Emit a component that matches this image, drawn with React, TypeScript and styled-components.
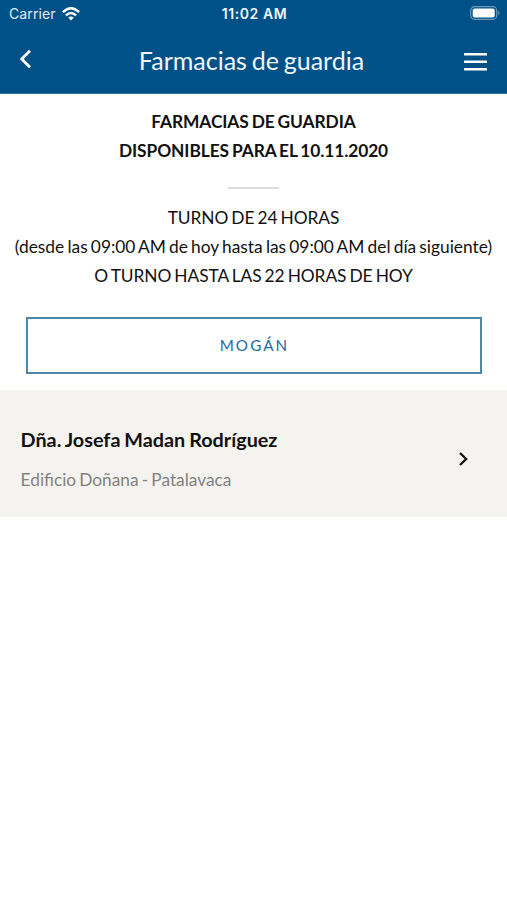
import React from "react";
import { createGlobalStyle, styled } from "styled-components";

const GlobalStyle = createGlobalStyle`
  * { box-sizing: border-box; }
  body { margin: 0; background: #fff; font-family: Lato, sans-serif; color: #111; }
`;
const Screen = styled.main`
  width: 507px;
  height: 900px;
  overflow: hidden;
  background: #fff;
`;
const Header = styled.header`
  height: 94px;
  background: #005187;
  border-bottom: 1px solid #3474a0;
  color: #fff;
`;
const StatusBar = styled.div`
  display: grid;
  grid-template-columns: 1fr auto 1fr;
  align-items: center;
  height: 27px;
  padding: 0 7px 0 9px;
  font-family: Inter, sans-serif;
  font-size: 14px;
  line-height: 27px;
`;
const Carrier = styled.div`
  display: flex;
  align-items: center;
  gap: 6px;
  letter-spacing: 0.1px;
  color: #e4edf3;
`;
const Clock = styled.div`
  padding-top: 1px;
  font-weight: 600;
  font-size: 14px;
  line-height: 26px;
  letter-spacing: 0.55px;
  color: #f1f6f9;
`;
const Battery = styled.svg`
  justify-self: end;
  margin-bottom: 1px;
`;
const NavBar = styled.nav`
  display: grid;
  grid-template-columns: 60px 1fr 60px;
  align-items: center;
  height: 66px;
`;
const IconButton = styled.button<{ $end?: boolean }>`
  display: flex;
  justify-content: ${(p) => (p.$end ? "flex-end" : "flex-start")};
  padding: ${(p) => (p.$end ? "3px 20px 0 0" : "0 0 2px 18px")};
  border: 0;
  background: none;
  color: inherit;
`;
const Title = styled.h1`
  margin: 0 4px 0 0;
  text-align: center;
  font-size: 25px;
  font-weight: 400;
  line-height: 30px;
  padding-bottom: 1px;
  word-spacing: -1.6px;
  color: #f1f6f9;
`;
const Intro = styled.section`
  padding-top: 13px;
  text-align: center;
  font-size: 17.35px;
  line-height: 29.3px;
  word-spacing: -1.25px;
`;
const Line = styled.p<{ $bold?: boolean; $caps?: boolean }>`
  margin: 0;
  white-space: nowrap;
  font-weight: ${(p) => (p.$bold ? 700 : 400)};
  letter-spacing: ${(p) => (p.$caps ? "-0.08px" : "0")};
`;
const Divider = styled.hr`
  width: 51px;
  height: 2px;
  margin: 21px auto 14px;
  border: 0;
  background: #ddd;
`;
const TownButton = styled.button`
  display: block;
  width: 456px;
  height: 57px;
  margin: 27px auto 16px;
  border: 2px solid #4b86ad;
  padding: 0 0 2px 2px;
  background: #fff;
  color: #2469a0;
  font: 400 15.2px/24px Lato, sans-serif;
  letter-spacing: 2.1px;
`;
const Pharmacy = styled.article`
  display: flex;
  align-items: center;
  justify-content: space-between;
  height: 127px;
  padding: 11px 38px 0 20.6px;
  background: #f4f3ef;
`;
const Name = styled.h2`
  margin: 0 0 17px;
  font-size: 19.8px;
  line-height: 24px;
  font-weight: 700;
  word-spacing: -0.9px;
`;
const Address = styled.p`
  margin: 0;
  color: #83827f;
  font-size: 17.3px;
  line-height: 24px;
  word-spacing: -1.25px;
`;

export default function App() {
  return (
    <Screen>
      <GlobalStyle />
      <Header>
        <StatusBar>
          <Carrier>
            <span>Carrier</span>
            <svg width="18" height="14" viewBox="0 0 18 14" fill="none" stroke="white" strokeWidth="2.4">
              <path d="M.9 5.2Q9-2.6 17.1 5.2M3.9 8.4Q9 3.6 14.1 8.4" />
              <path d="M6.2 10.6Q9 8.2 11.8 10.6L9 13.4Z" fill="white" stroke="none" />
            </svg>
          </Carrier>
          <Clock>11:02 AM</Clock>
          <Battery width="30" height="14" viewBox="0 0 30 14" fill="none">
            <rect x=".7" y=".7" width="26" height="12.6" rx="3.8" stroke="#6d98b7" strokeWidth="1.2" />
            <rect x="2.7" y="2.5" width="22" height="9" rx="2" fill="white" />
            <path d="M28.2 4.8Q30.8 7 28.2 9.2Z" fill="#6d98b7" />
          </Battery>
        </StatusBar>
        <NavBar>
          <IconButton aria-label="Volver">
            <svg width="14" height="20" viewBox="0 0 14 20" fill="none" stroke="currentColor" strokeWidth="2.8">
              <path d="M12 1.8 3.7 10l8.3 8.2" />
            </svg>
          </IconButton>
          <Title>Farmacias de guardia</Title>
          <IconButton aria-label="Menú" $end>
            <svg width="23" height="18" viewBox="0 0 23 18" fill="currentColor">
              <rect width="23" height="2.6" rx=".7" />
              <rect y="7.5" width="23" height="2.6" rx=".7" />
              <rect y="15" width="23" height="2.6" rx=".7" />
            </svg>
          </IconButton>
        </NavBar>
      </Header>
      <Intro>
        <Line $bold $caps>FARMACIAS DE GUARDIA</Line>
        <Line $bold $caps>DISPONIBLES PARA EL 10.11.2020</Line>
        <Divider />
        <Line $caps>TURNO DE 24 HORAS</Line>
        <Line>(desde las 09:00 AM de hoy hasta las 09:00 AM del día siguiente)</Line>
        <Line $caps>O TURNO HASTA LAS 22 HORAS DE HOY</Line>
      </Intro>
      <TownButton>MOGÁN</TownButton>
      <Pharmacy>
        <div>
          <Name>Dña. Josefa Madan Rodríguez</Name>
          <Address>Edificio Doñana - Patalavaca</Address>
        </div>
        <svg width="11" height="16" viewBox="0 0 11 16" fill="none" stroke="#111" strokeWidth="2.3">
          <path d="m2 2 6.2 6L2 14" />
        </svg>
      </Pharmacy>
    </Screen>
  );
}
